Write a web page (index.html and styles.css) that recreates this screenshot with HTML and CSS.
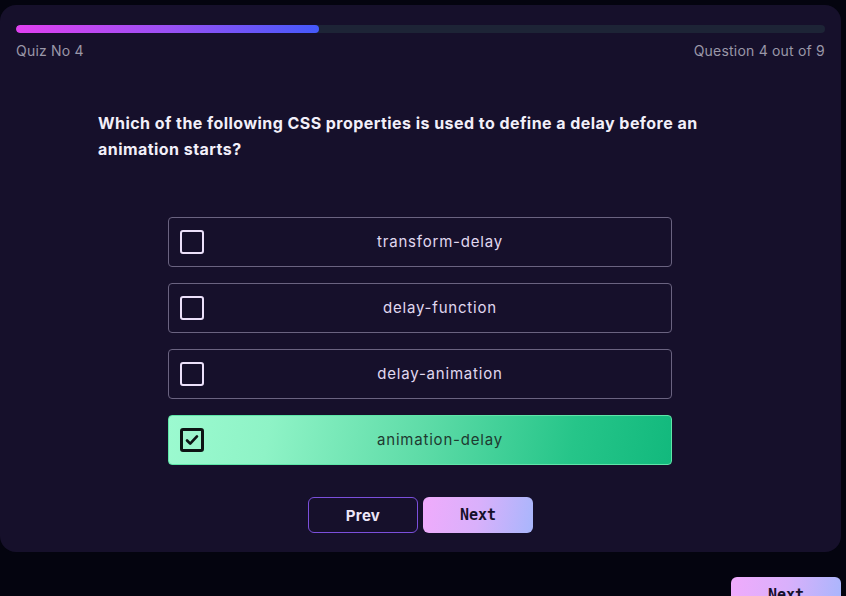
FILE: index.html
```html
<!DOCTYPE html>
<html>
<head>
<meta charset="utf-8">
<link rel="stylesheet" href="styles.css">
</head>
<body>
<div class="page">
  <div class="card">
    <div class="progress"><div class="progress-fill" style="width:37.5%"></div></div>
    <div class="meta">
      <span>Quiz No 4</span>
      <span>Question 4 out of 9</span>
    </div>
    <h2 class="question">Which of the following CSS properties is used to define a delay before an animation starts?</h2>
    <div class="options">
      <div class="option"><span class="box"></span><span class="label">transform-delay</span></div>
      <div class="option"><span class="box"></span><span class="label">delay-function</span></div>
      <div class="option"><span class="box"></span><span class="label">delay-animation</span></div>
      <div class="option selected"><span class="box"><svg viewBox="0 0 20 20" width="18" height="18"><path d="M4.5 10.5l3.5 3.5 7.5-8" fill="none" stroke="#0d1414" stroke-width="3" stroke-linecap="round" stroke-linejoin="round"/></svg></span><span class="label">animation-delay</span></div>
    </div>
    <div class="nav">
      <button class="btn prev">Prev</button>
      <button class="btn next">Next</button>
    </div>
  </div>
  <div class="footer">
    <button class="btn next">Next</button>
  </div>
</div>
</body>
</html>
```

FILE: styles.css
```css
* { box-sizing: border-box; }
html, body { margin: 0; padding: 0; }
body {
  background: #04040f;
  font-family: Inter, "Noto Sans", sans-serif;
  overflow: hidden;
  height: 596px;
}
.page {
  padding: 5px 5px 0 0;
}
.card {
  background: #16102b;
  border-radius: 16px;
  height: 547px;
  padding: 20px 16px 0 16px;
}
.progress {
  height: 8px;
  background: #1d2436;
  border-radius: 4px;
  overflow: hidden;
}
.progress-fill {
  height: 100%;
  border-radius: 4px;
  background: linear-gradient(90deg, #e040f0 0%, #9a50f4 50%, #4459fb 100%);
}
.meta {
  display: flex;
  justify-content: space-between;
  margin-top: 10px;
  font-size: 14px;
  letter-spacing: 0.2px;
  color: #9a97a8;
  line-height: 16px;
}
.question {
  margin: 51px 0 0 82px;
  width: 640px;
  font-size: 16px;
  font-weight: 700;
  letter-spacing: 0.45px;
  line-height: 26px;
  color: #f2eff9;
}
.options {
  margin: 55px auto 0;
  width: 504px;
  display: flex;
  flex-direction: column;
  gap: 16px;
  position: relative;
  left: -1px;
}
.option {
  height: 50px;
  border: 1px solid #6a6380;
  border-radius: 4px;
  display: flex;
  align-items: center;
  padding-left: 11px;
  color: #e0d8f0;
  font-size: 15px;
  letter-spacing: 0.8px;
}
.box {
  width: 24px;
  height: 24px;
  border: 2px solid #ece0fa;
  border-radius: 3px;
  display: flex;
  align-items: center;
  justify-content: center;
  flex: none;
}
.label {
  flex: 1;
  text-align: center;
  padding-left: 6px;
  padding-bottom: 1px;
}
.option.selected {
  border-color: #5ee6a8;
  background: linear-gradient(100deg, #9cfad0 0%, #8ef3c6 20%, #5fdca8 50%, #26c589 80%, #12b97d 100%);
  color: #1e3a30;
}
.option.selected .box {
  border: 3px solid #0d1414;
  background: #9cf5cc;
}
.nav {
  margin-top: 32px;
  display: flex;
  justify-content: center;
  gap: 5px;
}
.btn {
  width: 110px;
  height: 36px;
  border-radius: 6px;
  font-size: 15px;
  font-weight: 700;
  cursor: pointer;
}
.prev {
  background: transparent;
  border: 1px solid #7b4fdc;
  color: #ede6f8;
  font-family: Inter, sans-serif;
  letter-spacing: 0.3px;
}
.next {
  border: none;
  background: linear-gradient(100deg, #f0abfc 0%, #d9b0fb 50%, #a8b6fc 100%);
  color: #15102a;
  font-family: "DejaVu Sans Mono", monospace;
}
.footer {
  display: flex;
  justify-content: flex-end;
  margin-top: 25px;
}
```
